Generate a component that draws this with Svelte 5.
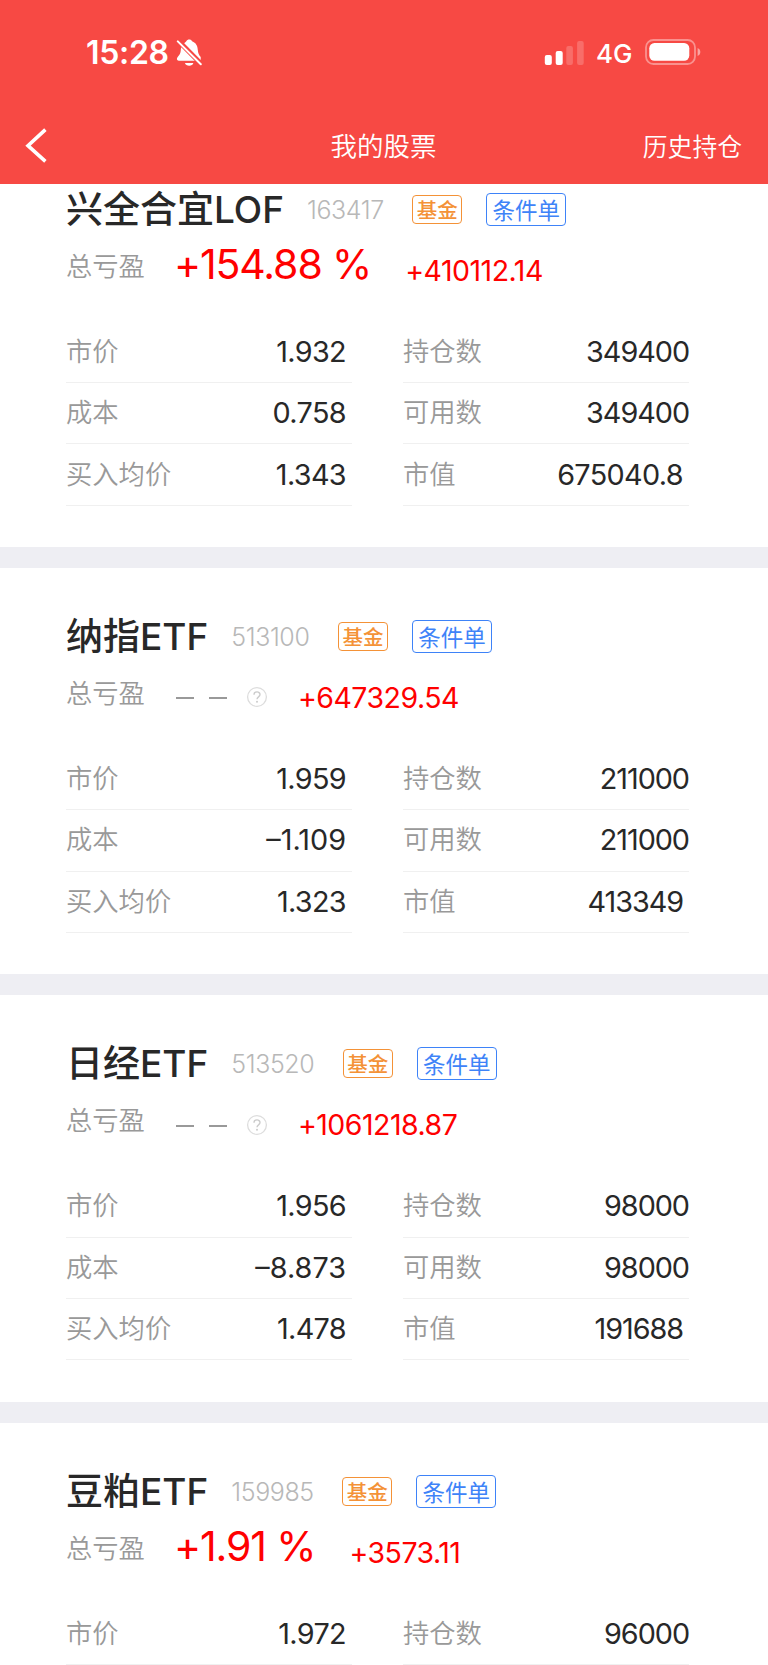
<script>
  const holdings = [
    {
      name: '兴全合宜LOF', code: '163417', percent: '+154.88 %', profit: '+410112.14',
      left: [['市价', '1.932'], ['成本', '0.758'], ['买入均价', '1.343']],
      right: [['持仓数', '349400'], ['可用数', '349400'], ['市值', '675040.8']],
    },
    {
      name: '纳指ETF', code: '513100', percent: null, profit: '+647329.54',
      left: [['市价', '1.959'], ['成本', '–1.109'], ['买入均价', '1.323']],
      right: [['持仓数', '211000'], ['可用数', '211000'], ['市值', '413349']],
    },
    {
      name: '日经ETF', code: '513520', percent: null, profit: '+1061218.87',
      left: [['市价', '1.956'], ['成本', '–8.873'], ['买入均价', '1.478']],
      right: [['持仓数', '98000'], ['可用数', '98000'], ['市值', '191688']],
    },
    {
      name: '豆粕ETF', code: '159985', percent: '+1.91 %', profit: '+3573.11',
      left: [['市价', '1.972']],
      right: [['持仓数', '96000']],
    },
  ];
</script>

<div class="app">
  <header>
    <div class="status">
      <span class="time">15:28</span>
      <svg class="bell" width="26" height="28" viewBox="0 0 26 28">
        <path d="M8 4.5C9 3.2 9.8 3 10.3 2.2C11.3 0 15.2 0 16.1 2.2C20 3.7 21.6 6.8 21.8 11C22 14 22.8 15.8 24.7 18V20.2C24.7 21.2 24 21.8 23 21.8H3C1.5 21.8 .6 20.8 1 19.3C1.5 17.5 4.2 16.2 4.7 12C4.9 9 5.4 6.7 8 4.5Z" fill="#fff" />
        <path d="M9 24H17.3C16.8 27.6 9.6 27.6 9 24Z" fill="#fff" />
        <path d="M1.5 1L26 25.7" stroke="#f74944" stroke-width="5" />
        <path d="M1.8 2.4L24.8 25.2" stroke="#fff" stroke-width="2" stroke-linecap="round" />
      </svg>
      <svg class="signal" width="40" height="26" viewBox="0 0 40 26">
        <rect x="0.8" y="15" width="7" height="10" rx="2" fill="#fff" />
        <rect x="11.7" y="11" width="7" height="14" rx="2" fill="#fff" />
        <rect x="22.3" y="6" width="6.6" height="19" rx="2" fill="#fff" opacity=".2" />
        <rect x="33.1" y="1" width="6.6" height="24" rx="2" fill="#fff" opacity=".2" />
      </svg>
      <span class="network">4G</span>
      <svg class="battery" width="57" height="26" viewBox="0 0 57 26">
        <rect x="1" y="1" width="49" height="24" rx="7.5" fill="none" stroke="#fff" stroke-width="1.8" opacity=".4" />
        <rect x="4.3" y="4" width="40" height="17.8" rx="5.2" fill="#fff" />
        <path d="M52.6 9C56.2 10.2 56.2 15.8 52.6 17Z" fill="#fff" opacity=".5" />
      </svg>
    </div>
    <nav>
      <svg class="back" width="23" height="38" viewBox="0 0 23 38">
        <path d="M20.4 2.6L3 18.7L20.4 34.4" fill="none" stroke="#fff" stroke-width="3.6" />
      </svg>
      <h1>我的股票</h1>
      <span class="history">历史持仓</span>
    </nav>
  </header>

  <main>
    {#each holdings as item}
      <section>
        <div class="title">
          <h2>{item.name}</h2>
          <span class="code">{item.code}</span>
          <span class="tag fund">基金</span>
          <span class="tag order">条件单</span>
        </div>
        <div class="total">
          <span class="label">总亏盈</span>
          {#if item.percent}
            <span class="percent">{item.percent}</span>
          {:else}
            <span class="dashes"><i></i><i></i></span>
            <svg class="help" width="22" height="22" viewBox="0 0 22 22">
              <circle cx="11" cy="11" r="9.4" fill="none" stroke="#ddd" stroke-width="1.3" />
              <path d="M8 8.8C8 5 14 5 14 8.6C14 10.9 11 10.8 11 13.3" fill="none" stroke="#ccc" stroke-width="1.4" />
              <circle cx="11" cy="15.8" r="1" fill="#ccc" />
            </svg>
          {/if}
          <span class="profit">{item.profit}</span>
        </div>
        <div class="columns">
          {#each [item.left, item.right] as column}
            <div class="column">
              {#each column as [label, value]}
                <div class="row">
                  <span class="label">{label}</span>
                  <span
                    class="value"
                    class:whole={!value.includes('.')}
                    class:negative={value.startsWith('–')}
                  >{value}</span>
                </div>
              {/each}
            </div>
          {/each}
        </div>
      </section>
    {/each}
  </main>
</div>

<style>
  .app {
    height: 1665px;
    overflow: hidden;
    background: #fff;
    color: #282828;
    font-family: Inter, "Noto Sans CJK SC", sans-serif;
    white-space: nowrap;
  }

  header {
    position: relative;
    z-index: 1;
    height: 184px;
    background: #f74944;
    color: #fff;
  }

  .status {
    display: flex;
    align-items: center;
    height: 105px;
    padding: 0 66px 0 86px;
  }

  .time {
    width: 90px;
    font-size: 32px;
    font-weight: 600;
    letter-spacing: -0.3px;
  }

  .signal {
    margin-left: auto;
  }

  .network {
    width: 36px;
    margin: 1px 13px 0 12px;
    font-size: 26px;
    font-weight: 500;
  }

  .battery {
    margin-bottom: 1px;
  }

  nav {
    display: grid;
    grid-template-columns: 1fr auto 1fr;
    align-items: center;
    height: 79px;
    padding: 0 26px 0 25px;
  }

  .back {
    margin-top: 2px;
  }

  h1 {
    margin: 0;
    font-size: 26.5px;
    font-weight: 350;
  }

  .history {
    justify-self: end;
    font-size: 24.8px;
    font-weight: 350;
  }

  /* the list is scrolled, its first card starts under the header */
  main {
    margin-top: -43.4px;
  }

  section {
    box-sizing: border-box;
    height: 427.3px;
    padding: 42px 79px 0 66px;
    border-bottom: 21px solid #eeeef3;
  }

  .title {
    display: flex;
    align-items: center;
    height: 52px;
  }

  h2 {
    margin: 0 0 4px;
    font-size: 37px;
    font-weight: 500;
  }

  .code {
    margin: 2px 28.5px 0 23px;
    color: #b8b8b8;
    font-size: 25px;
    font-weight: 350;
    letter-spacing: -0.4px;
  }

  .tag {
    box-sizing: border-box;
    display: flex;
    align-items: center;
    justify-content: center;
    margin-top: 1px;
    padding-bottom: 1px;
    border: 1.5px solid;
    border-radius: 4px;
  }

  .fund {
    width: 50px;
    height: 29px;
    color: #f49237;
    font-size: 20.5px;
    font-weight: 500;
  }

  .order {
    width: 80px;
    height: 33px;
    margin-left: 24px;
    color: #3e83f8;
    font-size: 22.5px;
  }

  .total {
    display: flex;
    align-items: center;
    height: 62px;
  }

  .label {
    margin-bottom: 3px;
    color: #999;
    font-size: 26.3px;
    font-weight: 350;
  }

  .percent {
    margin: 0 0 3px 29px;
    color: #f00;
    font-size: 41px;
    letter-spacing: -1.1px;
  }

  .dashes {
    display: flex;
    gap: 15px;
    margin: 11px 19px 0 31px;
  }

  .dashes i {
    width: 18px;
    height: 2px;
    background: #999;
  }

  .help {
    margin-top: 9px;
  }

  .profit {
    margin: 9px 0 0 34px;
    color: #f00;
    font-size: 28.5px;
    letter-spacing: -0.5px;
  }

  .help + .profit {
    margin-left: 30px;
  }

  .columns {
    display: grid;
    grid-template-columns: 286px 286px;
    justify-content: space-between;
    padding-top: 25px;
  }

  .row {
    box-sizing: border-box;
    display: flex;
    align-items: center;
    justify-content: space-between;
    height: 61.4px;
    border-bottom: 1.5px solid #f0f0f0;
  }

  .row .label {
    margin-bottom: 5px;
  }

  .value {
    margin-bottom: 1px;
    font-size: 28.8px;
    letter-spacing: -0.65px;
  }

  .whole {
    letter-spacing: -1.05px;
  }

  .negative {
    letter-spacing: 0;
  }

  .column:first-child .value,
  .row:nth-child(3) .value {
    margin-right: 6px;
  }
</style>
